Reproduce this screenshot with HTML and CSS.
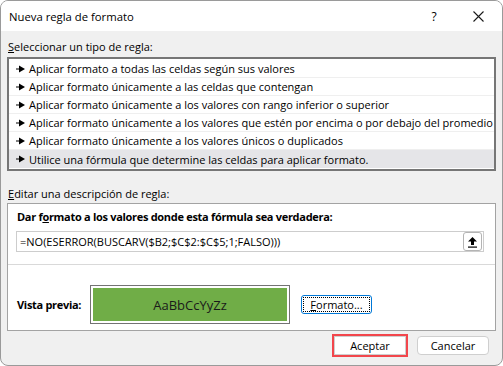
FILE: index.html
```
<!DOCTYPE html>
<html lang="es">
<head>
    <meta charset="UTF-8">
    <title>Nueva regla de formato</title>
    <link rel="stylesheet" href="styles.css">
</head>
<body>
    <div class="dialog">
        <div class="titlebar">
            <span class="title">Nueva regla de formato</span>
            <span class="help">?</span>
            <span class="close">
                <svg width="11" height="11" viewBox="0 0 11 11"><path d="M0.5 0.5L10.5 10.5M10.5 0.5L0.5 10.5" stroke="#1a1a1a" stroke-width="1.1" fill="none"/></svg>
            </span>
        </div>

        <div class="content">
            <div class="label label-first"><u>S</u>eleccionar un tipo de regla:</div>
            <ul class="rule-list">
                <li><svg class="arrow" width="9" height="8" viewBox="0 0 9 8"><path d="M0 4H4" stroke="#000" stroke-width="1.2"/><path d="M3 0.5L9 4L3 7.5Z" fill="#000"/></svg>Aplicar formato a todas las celdas según sus valores</li>
                <li><svg class="arrow" width="9" height="8" viewBox="0 0 9 8"><path d="M0 4H4" stroke="#000" stroke-width="1.2"/><path d="M3 0.5L9 4L3 7.5Z" fill="#000"/></svg>Aplicar formato únicamente a las celdas que contengan</li>
                <li><svg class="arrow" width="9" height="8" viewBox="0 0 9 8"><path d="M0 4H4" stroke="#000" stroke-width="1.2"/><path d="M3 0.5L9 4L3 7.5Z" fill="#000"/></svg>Aplicar formato únicamente a los valores con rango inferior o superior</li>
                <li><svg class="arrow" width="9" height="8" viewBox="0 0 9 8"><path d="M0 4H4" stroke="#000" stroke-width="1.2"/><path d="M3 0.5L9 4L3 7.5Z" fill="#000"/></svg>Aplicar formato únicamente a los valores que estén por encima o por debajo del promedio</li>
                <li><svg class="arrow" width="9" height="8" viewBox="0 0 9 8"><path d="M0 4H4" stroke="#000" stroke-width="1.2"/><path d="M3 0.5L9 4L3 7.5Z" fill="#000"/></svg>Aplicar formato únicamente a los valores únicos o duplicados</li>
                <li class="selected"><svg class="arrow" width="9" height="8" viewBox="0 0 9 8"><path d="M0 4H4" stroke="#000" stroke-width="1.2"/><path d="M3 0.5L9 4L3 7.5Z" fill="#000"/></svg>Utilice una fórmula que determine las celdas para aplicar formato.</li>
            </ul>

            <div class="label label-edit"><u>E</u>ditar una descripción de regla:</div>
            <div class="panel">
                <div class="panel-title">Dar f<u>o</u>rmato a los valores donde esta fórmula sea verdadera:</div>
                <div class="formula">
                    <span class="formula-text">=NO(ESERROR(BUSCARV($B2;$C$2:$C$5;1;FALSO)))</span>
                    <span class="collapse">
                        <svg width="11" height="12" viewBox="0 0 11 12"><path d="M5.5 1L10 5.5H7V9H4V5.5H1Z" fill="#000"/><rect x="1" y="10.5" width="9" height="1.2" fill="#000"/></svg>
                    </span>
                </div>
                <div class="divider"></div>
                <div class="preview-row">
                    <span class="preview-label">Vista previa:</span>
                    <div class="preview">
                        <div class="swatch">AaBbCcYyZz</div>
                    </div>
                    <span class="format-btn"><span class="focus"><u>F</u>ormato...</span></span>
                </div>
            </div>

            <div class="actions">
                <span class="btn btn-ok">Aceptar</span>
                <span class="btn">Cancelar</span>
            </div>
        </div>
    </div>
</body>
</html>
```

FILE: styles.css
```
* {
    margin: 0;
    padding: 0;
    box-sizing: border-box;
}

body {
    background-color: #ffffff;
    font-family: 'Open Sans', sans-serif;
    font-size: 11px;
    color: #000;
}

.dialog {
    width: 503px;
    height: 366px;
    border: 1px solid #9a9a9a;
    border-radius: 8px;
    background-color: #f0f0f0;
    overflow: hidden;
}

.titlebar {
    height: 30px;
    background-color: #fff;
    display: flex;
    align-items: center;
    padding: 0 14px 0 8px;
}

.title {
    flex: 1;
    font-size: 11.3px;
}

.help {
    width: 10px;
    text-align: center;
    font-size: 12px;
}

.close {
    width: 20px;
    margin-left: 29px;
    display: flex;
    justify-content: center;
}

.content {
    padding: 0 6px;
}

.label {
    line-height: 16px;
    padding-left: 1px;
}

.label-first {
    margin-top: 8px;
}

.label-edit {
    margin-top: 15px;
}

.rule-list {
    list-style: none;
    margin-top: 2px;
    background-color: #fff;
    border: 2px solid #767676;
    padding: 1px 0;
}

.rule-list li {
    height: 18px;
    display: flex;
    align-items: center;
    padding-left: 7px;
    border-bottom: 1px solid #efefef;
    white-space: nowrap;
}

.rule-list li:last-child {
    border-bottom: none;
}

.rule-list .selected {
    background-color: #e5e5e8;
}

.arrow {
    margin-right: 4px;
    flex-shrink: 0;
}

.panel {
    margin-top: 1px;
    background-color: #fff;
    border: 1px solid #a3a3a3;
    padding: 5px 11px 6px 9px;
}

.panel-title {
    font-weight: bold;
    line-height: 16px;
    letter-spacing: -0.3px;
}

.formula {
    margin: 6px 0 0 -1px;
    height: 21px;
    border: 1px solid #cdcdcd;
    display: flex;
    align-items: center;
    padding-left: 3px;
}

.formula-text {
    flex: 1;
}

.collapse {
    width: 19px;
    height: 19px;
    margin-right: 1px;
    border: 1px solid #b4b4b4;
    border-radius: 3px;
    display: flex;
    align-items: center;
    justify-content: center;
}

.divider {
    height: 1px;
    background-color: #d9d9d9;
    margin: 12px -11px 0 -9px;
}

.preview-row {
    display: flex;
    align-items: center;
    margin-top: 20px;
}

.preview-label {
    width: 73px;
    font-weight: bold;
    letter-spacing: -0.3px;
}

.preview {
    width: 200px;
    height: 39px;
    border: 1px solid #737373;
    padding: 2px;
}

.swatch {
    height: 100%;
    background-color: #70ad47;
    display: flex;
    align-items: center;
    justify-content: center;
    font-size: 13px;
    color: #1a1a1a;
}

.format-btn {
    margin-left: 11px;
    width: 71px;
    height: 19px;
    border: 1px solid #0078d7;
    border-radius: 3px;
    padding: 1px;
    background-color: #fff;
}

.format-btn .focus {
    display: flex;
    height: 100%;
    align-items: center;
    justify-content: center;
    border: 1px dotted #000;
}

.actions {
    display: flex;
    justify-content: flex-end;
    gap: 11px;
    margin-top: 5px;
    padding-right: 7px;
}

.btn {
    width: 72px;
    height: 19px;
    background-color: #fff;
    border: 1px solid #cfcfcf;
    border-radius: 4px;
    display: flex;
    align-items: center;
    justify-content: center;
}

.btn-ok {
    border-radius: 0;
    outline: 2px solid #f2464c;
}
```
